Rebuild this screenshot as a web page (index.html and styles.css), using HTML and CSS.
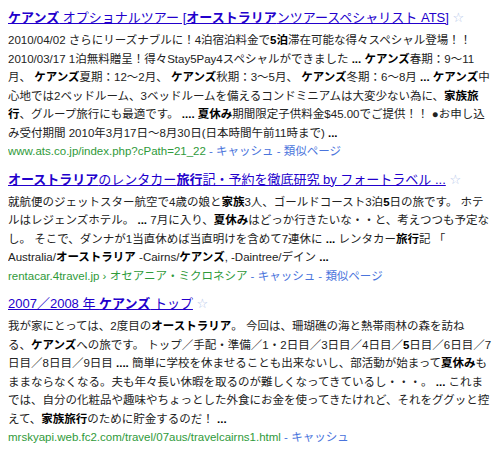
FILE: index.html
```html
<!DOCTYPE html>
<html lang="ja">
<head>
  <meta charset="UTF-8">
  <title>ケアンズ 検索結果</title>
  <link rel="stylesheet" href="styles.css">
</head>
<body>

  <ol class="results">
    <li class="result">
      <h3 class="title"><a href="#"><b>ケアンズ</b> オプショナルツアー [<b>オーストラリア</b>ンツアースペシャリスト ATS]</a> <span class="star">☆</span></h3>
      <div class="snippet">
        2010/04/02 さらにリーズナブルに！4泊宿泊料金で<b>5泊</b>滞在可能な得々スペシャル登場！！<br>
        2010/03/17 1泊無料贈呈！得々Stay5Pay4スペシャルができました <b>...</b> <b>ケアンズ</b>春期：9〜11<br>
        月、 <b>ケアンズ</b>夏期：12〜2月、 <b>ケアンズ</b>秋期：3〜5月、 <b>ケアンズ</b>冬期：6〜8月 <b>...</b> <b>ケアンズ</b>中<br>
        心地では2ベッドルーム、3ベッドルームを備えるコンドミニアムは大変少ない為に、<b>家族旅</b><br>
        <b>行</b>、グループ旅行にも最適です。 <b>....</b> <b>夏休み</b>期間限定子供料金$45.00でご提供！！ ●お申し込<br>
        み受付期間 2010年3月17日〜8月30日(日本時間午前11時まで) <b>...</b>
      </div>
      <div class="meta"><cite>www.ats.co.jp/index.php?cPath=21_22</cite> - <a href="#">キャッシュ</a> - <a href="#">類似ページ</a></div>
    </li>

    <li class="result">
      <h3 class="title"><a href="#"><b>オーストラリア</b>のレンタカー<b>旅行</b>記・予約を徹底研究 by フォートラベル ...</a> <span class="star">☆</span></h3>
      <div class="snippet">
        就航便のジェットスター航空で4歳の娘と<b>家族</b>3人、ゴールドコースト3泊<b>5</b>日の旅です。 ホテ<br>
        ルはレジェンズホテル。 <b>...</b> 7月に入り、<b>夏休み</b>はどっか行きたいな・・と、考えつつも予定な<br>
        し。 そこで、ダンナが1当直休めば当直明けを含めて7連休に <b>...</b> レンタカー<b>旅行</b>記 「<br>
        Australia/<b>オーストラリア</b> -Cairns/<b>ケアンズ</b>, -Daintree/デイン <b>...</b>
      </div>
      <div class="meta"><cite>rentacar.4travel.jp › オセアニア・ミクロネシア</cite> - <a href="#">キャッシュ</a> - <a href="#">類似ページ</a></div>
    </li>

    <li class="result">
      <h3 class="title"><a href="#">2007／2008 年 <b>ケアンズ</b> トップ</a> <span class="star">☆</span></h3>
      <div class="snippet">
        我が家にとっては、2度目の<b>オーストラリア</b>。 今回は、珊瑚礁の海と熱帯雨林の森を訪ね<br>
        る、<b>ケアンズ</b>への旅です。 トップ／手配・準備／1・2日目／3日目／4日目／<b>5</b>日目／6日目／7<br>
        日目／8日目／9日目 <b>....</b> 簡単に学校を休ませることも出来ないし、部活動が始まって<b>夏休み</b>も<br>
        ままならなくなる。夫も年々長い休暇を取るのが難しくなってきているし・・・。 <b>...</b> これま<br>
        では、自分の化粧品や趣味やちょっとした外食にお金を使ってきたけれど、それをググッと控<br>
        えて、<b>家族旅行</b>のために貯金するのだ！ <b>...</b>
      </div>
      <div class="meta"><cite>mrskyapi.web.fc2.com/travel/07aus/travelcairns1.html</cite> - <a href="#">キャッシュ</a></div>
    </li>
  </ol>

</body>
</html>
```

FILE: styles.css
```css
:root {
  --link: #2200cc;
  --text: #222222;
  --url: #2f9a3a;
  --sub-link: #4a74dc;
  --star: #b4c6ea;
  --font-main: 'Liberation Sans', Arial, 'Noto Sans CJK JP', sans-serif;
}

body {
  margin: 8px;
  background: #ffffff;
  color: var(--text);
  font-family: var(--font-main);
}

.results {
  list-style: none;
  margin: 0;
  padding: 0;
}

.result {
  margin-bottom: 9px;
}

.title {
  margin: 0 0 3px;
  font-size: 13px;
  font-weight: normal;
  line-height: 20px;
  white-space: nowrap;
}

.title a {
  color: var(--link);
  text-decoration: underline;
}

.title b {
  font-weight: bold;
}

.star {
  color: var(--star);
  font-family: 'DejaVu Sans', sans-serif;
  font-size: 13px;
}

.snippet {
  font-size: 11.5px;
  line-height: 18.5px;
  white-space: nowrap;
}

.snippet b {
  color: #000000;
}

.meta {
  font-size: 11.5px;
  line-height: 18.5px;
  color: var(--sub-link);
  white-space: nowrap;
}

.meta cite {
  font-style: normal;
  color: var(--url);
}

.meta a {
  color: var(--sub-link);
  text-decoration: none;
}
```
